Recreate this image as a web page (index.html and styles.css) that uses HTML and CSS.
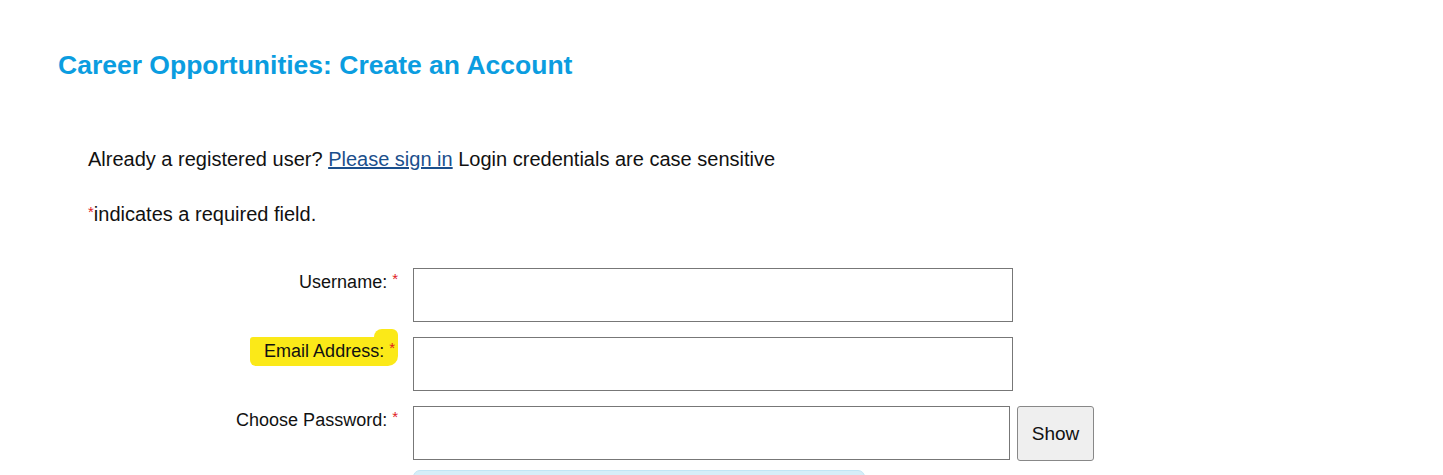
FILE: index.html
```html
<!DOCTYPE html>
<html lang="en">
<head>
    <meta charset="UTF-8">
    <meta name="viewport" content="width=device-width, initial-scale=1.0">
    <title>Career Opportunities: Create an Account</title>
    <link rel="stylesheet" href="styles.css">
</head>
<body>
    <main class="page">
        <h1 class="page-title">Career Opportunities: Create an Account</h1>

        <div class="intro">
            <p>Already a registered user? <a href="#">Please sign in</a> Login credentials are case sensitive</p>
            <p><span class="req">*</span>indicates a required field.</p>
        </div>

        <form class="account-form">
            <div class="form-row">
                <label for="username">Username: <span class="req">*</span></label>
                <input type="text" id="username" class="field">
            </div>
            <div class="form-row">
                <label for="email"><span class="marker">Email Address: <span class="req">*</span></span></label>
                <input type="email" id="email" class="field">
            </div>
            <div class="form-row">
                <label for="password">Choose Password: <span class="req">*</span></label>
                <div class="pw-wrap">
                    <input type="password" id="password" class="field field-pw">
                    <button type="button" class="show-btn">Show</button>
                </div>
            </div>
            <div class="form-row">
                <span></span>
                <div class="pw-hint"></div>
            </div>
        </form>
    </main>
</body>
</html>
```

FILE: styles.css
```css
/* Basic page styles */
body {
    margin: 0;
    font-family: "Liberation Sans", Arial, sans-serif;
    font-size: 18px;
    color: #111;
    background: #fff;
    overflow: hidden;
}
.page {
    padding: 50px 0 0 58px;
}
.page-title {
    margin: 0;
    font-size: 26.5px;
    font-weight: bold;
    color: #0b9de0;
}
.intro {
    padding: 67px 0 0 30px;
    font-size: 20px;
}
.intro p {
    margin: 0 0 29px 0;
    line-height: 23px;
}
.intro a {
    color: #1b4f8c;
}
.req {
    color: #e0201e;
    font-size: 15px;
    vertical-align: 4px;
}
.account-form {
    padding-top: 13px;
}
.form-row {
    display: grid;
    grid-template-columns: 342px 600px;
    column-gap: 13px;
    margin-bottom: 15px;
}
.form-row label {
    text-align: right;
    padding-top: 2px;
    padding-right: 2px;
}
.marker {
    background: #fbe918;
    padding: 4px 3px 5px 14px;
    border-radius: 3px 0 10px 6px;
    position: relative;
    z-index: 0;
}
/* taller stroke behind the asterisk */
.marker::after {
    content: "";
    position: absolute;
    right: 0;
    top: -8px;
    width: 24px;
    height: 22px;
    background: #fbe918;
    border-radius: 8px 6px 0 0;
    z-index: -1;
}
.field {
    box-sizing: border-box;
    width: 600px;
    height: 54px;
    border: 1px solid #777;
    margin: 0;
}
.pw-wrap {
    display: flex;
    gap: 7px;
}
.field-pw {
    width: 597px;
    flex: none;
}
.show-btn {
    flex: none;
    width: 77px;
    height: 55px;
    font: inherit;
    font-size: 19px;
    color: #111;
    background: #efefef;
    border: 1px solid #888;
    border-radius: 3px;
}
.pw-hint {
    width: 450px;
    height: 30px;
    margin-top: -6px;
    background: #d6eef8;
    border: 1px solid #c2e5f4;
    border-radius: 7px;
}
```
